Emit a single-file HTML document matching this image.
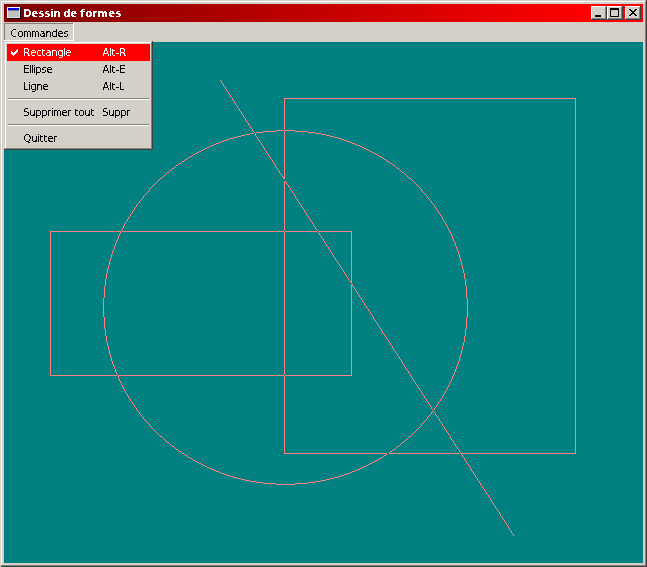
<!DOCTYPE html>
<html><head><meta charset="utf-8"><title>Dessin de formes</title>
<style>
html,body{margin:0;padding:0;}
body{width:647px;height:567px;overflow:hidden;background:#d4d0c8;position:relative;font-family:"Liberation Sans",sans-serif;font-size:11px;color:#000;}
div,span{position:absolute;box-sizing:border-box;white-space:nowrap;}
div>svg{position:absolute;left:0;top:0;}
#title{left:4px;top:4px;width:639px;height:18px;background:linear-gradient(to right,#800000 0,#800000 18px,#ff0000 585px,#ff0000 100%);}
i{position:absolute;left:0;top:0;width:11px;height:2px;background:#0000ff;}
b{position:absolute;left:0;top:2px;width:11px;height:1px;background:#808080;}
u{position:absolute;left:0;top:0;width:12px;height:10px;box-sizing:border-box;border-right:1px solid #dfdfdf;border-bottom:1px solid #dfdfdf;}
#canvas{left:4px;top:42px;width:639px;height:521px;background:#008080;}
.hl{left:7px;top:44px;width:143px;height:17px;background:#ff0000;}
.sep{left:8px;width:141px;height:2px;border-top:1px solid #808080;border-bottom:1px solid #fff;}
#txt{position:absolute;left:0;top:0;font-family:"DejaVu Sans Condensed","Liberation Sans",sans-serif;font-size:11px;}
</style></head><body>
<div style="left:0px;top:0px;width:647px;height:567px;background:#404040"><div style="left:0;top:0;width:646px;height:566px;background:#d4d0c8"><div style="left:1px;top:1px;width:645px;height:565px;background:#808080"><div style="left:0;top:0;width:644px;height:564px;background:#fff"><div style="left:1px;top:1px;width:643px;height:563px;background:#d4d0c8"></div></div></div></div></div><div style="left:0;top:566px;width:1px;height:1px;background:#d4d0c8"></div>
<div id="title"></div>
<div style="left:7px;top:7px;width:14px;height:12px;background:#000"><div style="left:0;top:0;width:13px;height:11px;background:#fff"><div style="left:1px;top:1px;width:12px;height:10px;background:#c0c0c0"><i></i><b></b><u></u></div></div></div>
<div style="left:591px;top:6px;width:16px;height:14px;background:#404040"><div style="left:0;top:0;width:15px;height:13px;background:#fff"><div style="left:1px;top:1px;width:14px;height:12px;background:#808080"><div style="left:0;top:0;width:13px;height:11px;background:#d4d0c8"><div style="left:1px;top:1px;width:12px;height:10px;background:#d4d0c8"><svg width="12" height="10" viewBox="2 2 12 10"><path d="M4 9h6v2h-6z" fill="#000"/></svg></div></div></div></div></div><div style="left:607px;top:6px;width:16px;height:14px;background:#404040"><div style="left:0;top:0;width:15px;height:13px;background:#fff"><div style="left:1px;top:1px;width:14px;height:12px;background:#808080"><div style="left:0;top:0;width:13px;height:11px;background:#d4d0c8"><div style="left:1px;top:1px;width:12px;height:10px;background:#d4d0c8"><svg width="12" height="10" viewBox="2 2 12 10"><path d="M3 2h9v9h-9zM4 4v6h7v-6z" fill="#000" fill-rule="evenodd"/></svg></div></div></div></div></div><div style="left:625px;top:6px;width:16px;height:14px;background:#404040"><div style="left:0;top:0;width:15px;height:13px;background:#fff"><div style="left:1px;top:1px;width:14px;height:12px;background:#808080"><div style="left:0;top:0;width:13px;height:11px;background:#d4d0c8"><div style="left:1px;top:1px;width:12px;height:10px;background:#d4d0c8"><svg width="12" height="10" viewBox="2 2 12 10"><path d="M4 3h2v1h1v1h2v-1h1v-1h2v1h-1v1h-1v1h-1v1h1v1h1v1h1v1h-2v-1h-1v-1h-2v1h-1v1h-2v-1h1v-1h1v-1h1v-1h-1v-1h-1v-1h-1z" fill="#000"/></svg></div></div></div></div></div>
<div style="left:4px;top:23px;width:70px;height:18px;background:#fff"><div style="left:0;top:0;width:69px;height:17px;background:#808080"><div style="left:1px;top:1px;width:68px;height:16px;background:#d4d0c8"></div></div></div>
<div id="canvas"></div>
<svg width="647" height="567" style="position:absolute;left:0;top:0" shape-rendering="crispEdges"><path fill="#ff7f7f" d="M284 98h292v1h-292zM276 130h8v1h-8zM285 130h10v1h-10zM263 131h13v1h-13zM295 131h13v1h-13zM256 132h7v1h-7zM308 132h7v1h-7zM250 133h4v1h-4zM315 133h6v1h-6zM245 134h5v1h-5zM321 134h5v1h-5zM241 135h4v1h-4zM326 135h4v1h-4zM237 136h4v1h-4zM330 136h4v1h-4zM233 137h4v1h-4zM334 137h4v1h-4zM230 138h3v1h-3zM338 138h3v1h-3zM227 139h3v1h-3zM341 139h3v1h-3zM224 140h3v1h-3zM344 140h3v1h-3zM221 141h3v1h-3zM347 141h3v1h-3zM219 142h2v1h-2zM350 142h2v1h-2zM216 143h3v1h-3zM352 143h3v1h-3zM214 144h2v1h-2zM355 144h2v1h-2zM211 145h3v1h-3zM357 145h3v1h-3zM209 146h2v1h-2zM360 146h2v1h-2zM207 147h2v1h-2zM362 147h2v1h-2zM205 148h2v1h-2zM364 148h2v1h-2zM203 149h2v1h-2zM366 149h2v1h-2zM201 150h2v1h-2zM368 150h2v1h-2zM199 151h2v1h-2zM370 151h2v1h-2zM197 152h2v1h-2zM372 152h2v1h-2zM195 153h2v1h-2zM374 153h2v1h-2zM193 154h2v1h-2zM376 154h2v1h-2zM190 156h2v1h-2zM379 156h2v1h-2zM188 157h2v1h-2zM381 157h2v1h-2zM185 159h2v1h-2zM384 159h2v1h-2zM182 161h2v1h-2zM387 161h2v1h-2zM179 163h2v1h-2zM390 163h2v1h-2zM176 165h2v1h-2zM393 165h2v1h-2zM172 168h2v1h-2zM397 168h2v1h-2zM167 172h2v1h-2zM402 172h2v1h-2zM283 177h2v1h-2zM160 178h2v1h-2zM283 178h2v1h-2zM409 178h2v1h-2zM284 181h2v1h-2zM50 231h71v1h-71zM122 231h162v1h-162zM285 231h32v1h-32zM318 231h34v1h-34zM350 281h2v1h-2zM350 282h2v1h-2zM351 284h2v1h-2zM351 285h2v1h-2zM50 375h67v1h-67zM118 375h166v1h-166zM285 375h67v1h-67zM432 411h2v1h-2zM160 436h2v1h-2zM409 436h2v1h-2zM167 442h2v1h-2zM402 442h2v1h-2zM172 446h2v1h-2zM397 446h2v1h-2zM176 449h2v1h-2zM393 449h2v1h-2zM179 451h2v1h-2zM390 451h2v1h-2zM182 453h2v1h-2zM284 453h103v1h-103zM389 453h71v1h-71zM461 453h115v1h-115zM185 455h2v1h-2zM384 455h2v1h-2zM188 457h2v1h-2zM381 457h2v1h-2zM190 458h2v1h-2zM379 458h2v1h-2zM193 460h2v1h-2zM376 460h2v1h-2zM195 461h2v1h-2zM374 461h2v1h-2zM197 462h2v1h-2zM372 462h2v1h-2zM199 463h2v1h-2zM370 463h2v1h-2zM201 464h2v1h-2zM368 464h2v1h-2zM203 465h2v1h-2zM366 465h2v1h-2zM205 466h2v1h-2zM364 466h2v1h-2zM207 467h2v1h-2zM362 467h2v1h-2zM209 468h2v1h-2zM360 468h2v1h-2zM211 469h3v1h-3zM357 469h3v1h-3zM214 470h2v1h-2zM355 470h2v1h-2zM216 471h3v1h-3zM352 471h3v1h-3zM219 472h2v1h-2zM350 472h2v1h-2zM221 473h3v1h-3zM347 473h3v1h-3zM224 474h3v1h-3zM344 474h3v1h-3zM227 475h3v1h-3zM341 475h3v1h-3zM230 476h3v1h-3zM338 476h3v1h-3zM233 477h4v1h-4zM334 477h4v1h-4zM237 478h4v1h-4zM330 478h4v1h-4zM241 479h4v1h-4zM326 479h4v1h-4zM245 480h5v1h-5zM321 480h5v1h-5zM250 481h6v1h-6zM315 481h6v1h-6zM256 482h7v1h-7zM308 482h7v1h-7zM263 483h13v1h-13zM295 483h13v1h-13zM276 484h19v1h-19zM50 232h1v143h-1zM103 298h1v19h-1zM104 286h1v12h-1zM104 317h1v12h-1zM105 279h1v7h-1zM105 329h1v7h-1zM106 273h1v6h-1zM106 336h1v6h-1zM107 269h1v4h-1zM107 342h1v4h-1zM108 265h1v4h-1zM108 346h1v4h-1zM109 261h1v4h-1zM109 350h1v4h-1zM110 258h1v3h-1zM110 354h1v3h-1zM111 254h1v4h-1zM111 357h1v4h-1zM112 251h1v3h-1zM112 361h1v3h-1zM113 249h1v2h-1zM113 364h1v2h-1zM114 246h1v3h-1zM114 366h1v3h-1zM115 243h1v3h-1zM115 369h1v3h-1zM116 241h1v2h-1zM116 372h1v2h-1zM117 239h1v2h-1zM117 374h1v1h-1zM118 236h1v3h-1zM118 376h1v3h-1zM119 234h1v2h-1zM119 379h1v2h-1zM120 232h1v2h-1zM120 381h1v2h-1zM121 230h1v1h-1zM121 383h1v2h-1zM122 228h1v2h-1zM122 385h1v2h-1zM123 226h1v2h-1zM123 387h1v2h-1zM124 224h1v2h-1zM124 389h1v2h-1zM125 222h1v2h-1zM125 391h1v2h-1zM126 221h1v1h-1zM126 393h1v1h-1zM127 219h1v2h-1zM127 394h1v2h-1zM128 217h1v2h-1zM128 396h1v2h-1zM129 216h1v1h-1zM129 398h1v1h-1zM130 214h1v2h-1zM130 399h1v2h-1zM131 213h1v1h-1zM131 401h1v1h-1zM132 211h1v2h-1zM132 402h1v2h-1zM133 210h1v1h-1zM133 404h1v1h-1zM134 208h1v2h-1zM134 405h1v2h-1zM135 207h1v1h-1zM135 407h1v1h-1zM136 205h1v2h-1zM136 408h1v2h-1zM137 204h1v1h-1zM137 410h1v1h-1zM138 203h1v1h-1zM138 411h1v1h-1zM139 201h1v2h-1zM139 412h1v2h-1zM140 200h1v1h-1zM140 414h1v1h-1zM141 199h1v1h-1zM141 415h1v1h-1zM142 198h1v1h-1zM142 416h1v1h-1zM143 196h1v2h-1zM143 417h1v2h-1zM144 195h1v1h-1zM144 419h1v1h-1zM145 194h1v1h-1zM145 420h1v1h-1zM146 193h1v1h-1zM146 421h1v1h-1zM147 192h1v1h-1zM147 422h1v1h-1zM148 191h1v1h-1zM148 423h1v1h-1zM149 189h1v2h-1zM149 424h1v2h-1zM150 188h1v1h-1zM150 426h1v1h-1zM151 187h1v1h-1zM151 427h1v1h-1zM152 186h1v1h-1zM152 428h1v1h-1zM153 185h1v1h-1zM153 429h1v1h-1zM154 184h1v1h-1zM154 430h1v1h-1zM155 183h1v1h-1zM155 431h1v1h-1zM156 182h1v1h-1zM156 432h1v1h-1zM157 181h1v1h-1zM157 433h1v1h-1zM158 180h1v1h-1zM158 434h1v1h-1zM159 179h1v1h-1zM159 435h1v1h-1zM162 177h1v1h-1zM162 437h1v1h-1zM163 176h1v1h-1zM163 438h1v1h-1zM164 175h1v1h-1zM164 439h1v1h-1zM165 174h1v1h-1zM165 440h1v1h-1zM166 173h1v1h-1zM166 441h1v1h-1zM169 171h1v1h-1zM169 443h1v1h-1zM170 170h1v1h-1zM170 444h1v1h-1zM171 169h1v1h-1zM171 445h1v1h-1zM174 167h1v1h-1zM174 447h1v1h-1zM175 166h1v1h-1zM175 448h1v1h-1zM178 164h1v1h-1zM178 450h1v1h-1zM181 162h1v1h-1zM181 452h1v1h-1zM184 160h1v1h-1zM184 454h1v1h-1zM187 158h1v1h-1zM187 456h1v1h-1zM192 155h1v1h-1zM192 459h1v1h-1zM220 80h1v1h-1zM221 81h1v2h-1zM222 83h1v1h-1zM223 84h1v2h-1zM224 86h1v1h-1zM225 87h1v2h-1zM226 89h1v2h-1zM227 91h1v1h-1zM228 92h1v2h-1zM229 94h1v1h-1zM230 95h1v2h-1zM231 97h1v1h-1zM232 98h1v2h-1zM233 100h1v1h-1zM234 101h1v2h-1zM235 103h1v2h-1zM236 105h1v1h-1zM237 106h1v2h-1zM238 108h1v1h-1zM239 109h1v2h-1zM240 111h1v1h-1zM241 112h1v2h-1zM242 114h1v1h-1zM243 115h1v2h-1zM244 117h1v1h-1zM245 118h1v2h-1zM246 120h1v2h-1zM247 122h1v1h-1zM248 123h1v2h-1zM249 125h1v1h-1zM250 126h1v2h-1zM251 128h1v1h-1zM252 129h1v2h-1zM253 131h1v1h-1zM254 132h1v1h-1zM255 133h1v3h-1zM256 136h1v1h-1zM257 137h1v2h-1zM258 139h1v1h-1zM259 140h1v2h-1zM260 142h1v1h-1zM261 143h1v2h-1zM262 145h1v1h-1zM263 146h1v2h-1zM264 148h1v2h-1zM265 150h1v1h-1zM266 151h1v2h-1zM267 153h1v1h-1zM268 154h1v2h-1zM269 156h1v1h-1zM270 157h1v2h-1zM271 159h1v1h-1zM272 160h1v2h-1zM273 162h1v1h-1zM274 163h1v2h-1zM275 165h1v2h-1zM276 167h1v1h-1zM277 168h1v2h-1zM278 170h1v1h-1zM279 171h1v2h-1zM280 173h1v1h-1zM281 174h1v2h-1zM282 176h1v1h-1zM284 99h1v31h-1zM284 131h1v46h-1zM284 182h1v49h-1zM284 232h1v143h-1zM284 376h1v77h-1zM286 182h1v2h-1zM287 184h1v1h-1zM288 185h1v2h-1zM289 187h1v1h-1zM290 188h1v2h-1zM291 190h1v1h-1zM292 191h1v2h-1zM293 193h1v1h-1zM294 194h1v2h-1zM295 196h1v2h-1zM296 198h1v1h-1zM297 199h1v2h-1zM298 201h1v1h-1zM299 202h1v2h-1zM300 204h1v1h-1zM301 205h1v2h-1zM302 207h1v1h-1zM303 208h1v2h-1zM304 210h1v2h-1zM305 212h1v1h-1zM306 213h1v2h-1zM307 215h1v1h-1zM308 216h1v2h-1zM309 218h1v1h-1zM310 219h1v2h-1zM311 221h1v1h-1zM312 222h1v2h-1zM313 224h1v2h-1zM314 226h1v1h-1zM315 227h1v2h-1zM316 229h1v1h-1zM317 230h1v1h-1zM318 232h1v1h-1zM319 233h1v2h-1zM320 235h1v1h-1zM321 236h1v2h-1zM322 238h1v1h-1zM323 239h1v2h-1zM324 241h1v2h-1zM325 243h1v1h-1zM326 244h1v2h-1zM327 246h1v1h-1zM328 247h1v2h-1zM329 249h1v1h-1zM330 250h1v2h-1zM331 252h1v1h-1zM332 253h1v2h-1zM333 255h1v2h-1zM334 257h1v1h-1zM335 258h1v2h-1zM336 260h1v1h-1zM337 261h1v2h-1zM338 263h1v1h-1zM339 264h1v2h-1zM340 266h1v1h-1zM341 267h1v2h-1zM342 269h1v1h-1zM343 270h1v2h-1zM344 272h1v2h-1zM345 274h1v1h-1zM346 275h1v2h-1zM347 277h1v1h-1zM348 278h1v2h-1zM349 280h1v1h-1zM351 232h1v49h-1zM351 286h1v89h-1zM353 286h1v2h-1zM354 288h1v1h-1zM355 289h1v2h-1zM356 291h1v1h-1zM357 292h1v2h-1zM358 294h1v1h-1zM359 295h1v2h-1zM360 297h1v1h-1zM361 298h1v2h-1zM362 300h1v2h-1zM363 302h1v1h-1zM364 303h1v2h-1zM365 305h1v1h-1zM366 306h1v2h-1zM367 308h1v1h-1zM368 309h1v2h-1zM369 311h1v1h-1zM370 312h1v2h-1zM371 314h1v1h-1zM372 315h1v2h-1zM373 317h1v2h-1zM374 319h1v1h-1zM375 320h1v2h-1zM376 322h1v1h-1zM377 323h1v2h-1zM378 155h1v1h-1zM378 325h1v1h-1zM378 459h1v1h-1zM379 326h1v2h-1zM380 328h1v1h-1zM381 329h1v2h-1zM382 331h1v2h-1zM383 158h1v1h-1zM383 333h1v1h-1zM383 456h1v1h-1zM384 334h1v2h-1zM385 336h1v1h-1zM386 160h1v1h-1zM386 337h1v2h-1zM386 454h1v1h-1zM387 339h1v1h-1zM388 340h1v2h-1zM389 162h1v1h-1zM389 342h1v1h-1zM389 452h1v1h-1zM390 343h1v2h-1zM391 345h1v1h-1zM392 164h1v1h-1zM392 346h1v2h-1zM392 450h1v1h-1zM393 348h1v2h-1zM394 350h1v1h-1zM395 166h1v1h-1zM395 351h1v2h-1zM395 448h1v1h-1zM396 167h1v1h-1zM396 353h1v1h-1zM396 447h1v1h-1zM397 354h1v2h-1zM398 356h1v1h-1zM399 169h1v1h-1zM399 357h1v2h-1zM399 445h1v1h-1zM400 170h1v1h-1zM400 359h1v1h-1zM400 444h1v1h-1zM401 171h1v1h-1zM401 360h1v2h-1zM401 443h1v1h-1zM402 362h1v2h-1zM403 364h1v1h-1zM404 173h1v1h-1zM404 365h1v2h-1zM404 441h1v1h-1zM405 174h1v1h-1zM405 367h1v1h-1zM405 440h1v1h-1zM406 175h1v1h-1zM406 368h1v2h-1zM406 439h1v1h-1zM407 176h1v1h-1zM407 370h1v1h-1zM407 438h1v1h-1zM408 177h1v1h-1zM408 371h1v2h-1zM408 437h1v1h-1zM409 373h1v1h-1zM410 374h1v2h-1zM411 179h1v1h-1zM411 376h1v2h-1zM411 435h1v1h-1zM412 180h1v1h-1zM412 378h1v1h-1zM412 434h1v1h-1zM413 181h1v1h-1zM413 379h1v2h-1zM413 433h1v1h-1zM414 182h1v1h-1zM414 381h1v1h-1zM414 432h1v1h-1zM415 183h1v1h-1zM415 382h1v2h-1zM415 431h1v1h-1zM416 184h1v1h-1zM416 384h1v1h-1zM416 430h1v1h-1zM417 185h1v1h-1zM417 385h1v2h-1zM417 429h1v1h-1zM418 186h1v1h-1zM418 387h1v1h-1zM418 428h1v1h-1zM419 187h1v1h-1zM419 388h1v2h-1zM419 427h1v1h-1zM420 188h1v1h-1zM420 390h1v1h-1zM420 426h1v1h-1zM421 189h1v2h-1zM421 391h1v2h-1zM421 424h1v2h-1zM422 191h1v1h-1zM422 393h1v2h-1zM422 423h1v1h-1zM423 192h1v1h-1zM423 395h1v1h-1zM423 422h1v1h-1zM424 193h1v1h-1zM424 396h1v2h-1zM424 421h1v1h-1zM425 194h1v1h-1zM425 398h1v1h-1zM425 420h1v1h-1zM426 195h1v1h-1zM426 399h1v2h-1zM426 419h1v1h-1zM427 196h1v2h-1zM427 401h1v1h-1zM427 417h1v2h-1zM428 198h1v1h-1zM428 402h1v2h-1zM428 416h1v1h-1zM429 199h1v1h-1zM429 404h1v1h-1zM429 415h1v1h-1zM430 200h1v1h-1zM430 405h1v2h-1zM430 414h1v1h-1zM431 201h1v2h-1zM431 407h1v2h-1zM431 412h1v2h-1zM432 203h1v1h-1zM432 409h1v1h-1zM433 204h1v1h-1zM434 205h1v2h-1zM434 408h1v2h-1zM434 412h1v1h-1zM435 207h1v1h-1zM435 407h1v1h-1zM435 413h1v2h-1zM436 208h1v2h-1zM436 405h1v2h-1zM436 415h1v1h-1zM437 210h1v1h-1zM437 404h1v1h-1zM437 416h1v2h-1zM438 211h1v2h-1zM438 402h1v2h-1zM438 418h1v1h-1zM439 213h1v1h-1zM439 401h1v1h-1zM439 419h1v2h-1zM440 214h1v2h-1zM440 399h1v2h-1zM440 421h1v1h-1zM441 216h1v1h-1zM441 398h1v1h-1zM441 422h1v2h-1zM442 217h1v2h-1zM442 396h1v2h-1zM442 424h1v2h-1zM443 219h1v2h-1zM443 394h1v2h-1zM443 426h1v1h-1zM444 221h1v1h-1zM444 393h1v1h-1zM444 427h1v2h-1zM445 222h1v2h-1zM445 391h1v2h-1zM445 429h1v1h-1zM446 224h1v2h-1zM446 389h1v2h-1zM446 430h1v2h-1zM447 226h1v2h-1zM447 387h1v2h-1zM447 432h1v1h-1zM448 228h1v2h-1zM448 385h1v2h-1zM448 433h1v2h-1zM449 230h1v2h-1zM449 383h1v2h-1zM449 435h1v1h-1zM450 232h1v2h-1zM450 381h1v2h-1zM450 436h1v2h-1zM451 234h1v2h-1zM451 379h1v2h-1zM451 438h1v2h-1zM452 236h1v3h-1zM452 376h1v3h-1zM452 440h1v1h-1zM453 239h1v2h-1zM453 374h1v2h-1zM453 441h1v2h-1zM454 241h1v2h-1zM454 372h1v2h-1zM454 443h1v1h-1zM455 243h1v3h-1zM455 369h1v3h-1zM455 444h1v2h-1zM456 246h1v3h-1zM456 366h1v3h-1zM456 446h1v1h-1zM457 249h1v2h-1zM457 364h1v2h-1zM457 447h1v2h-1zM458 251h1v3h-1zM458 361h1v3h-1zM458 449h1v1h-1zM459 254h1v4h-1zM459 357h1v4h-1zM459 450h1v2h-1zM460 258h1v3h-1zM460 354h1v3h-1zM460 452h1v1h-1zM461 261h1v4h-1zM461 350h1v4h-1zM461 454h1v1h-1zM462 265h1v4h-1zM462 346h1v4h-1zM462 455h1v2h-1zM463 269h1v4h-1zM463 342h1v4h-1zM463 457h1v1h-1zM464 273h1v6h-1zM464 336h1v6h-1zM464 458h1v2h-1zM465 279h1v7h-1zM465 329h1v7h-1zM465 460h1v1h-1zM466 286h1v12h-1zM466 317h1v12h-1zM466 461h1v2h-1zM467 298h1v19h-1zM467 463h1v1h-1zM468 464h1v2h-1zM469 466h1v1h-1zM470 467h1v2h-1zM471 469h1v2h-1zM472 471h1v1h-1zM473 472h1v2h-1zM474 474h1v1h-1zM475 475h1v2h-1zM476 477h1v1h-1zM477 478h1v2h-1zM478 480h1v1h-1zM479 481h1v2h-1zM480 483h1v2h-1zM481 485h1v1h-1zM482 486h1v2h-1zM483 488h1v1h-1zM484 489h1v2h-1zM485 491h1v1h-1zM486 492h1v2h-1zM487 494h1v1h-1zM488 495h1v2h-1zM489 497h1v1h-1zM490 498h1v2h-1zM491 500h1v2h-1zM492 502h1v1h-1zM493 503h1v2h-1zM494 505h1v1h-1zM495 506h1v2h-1zM496 508h1v1h-1zM497 509h1v2h-1zM498 511h1v1h-1zM499 512h1v2h-1zM500 514h1v2h-1zM501 516h1v1h-1zM502 517h1v2h-1zM503 519h1v1h-1zM504 520h1v2h-1zM505 522h1v1h-1zM506 523h1v2h-1zM507 525h1v1h-1zM508 526h1v2h-1zM509 528h1v2h-1zM510 530h1v1h-1zM511 531h1v2h-1zM512 533h1v1h-1zM513 534h1v2h-1zM575 99h1v354h-1z"/></svg>
<div style="left:4px;top:41px;width:149px;height:109px;background:#404040"><div style="left:0;top:0;width:148px;height:108px;background:#d4d0c8"><div style="left:1px;top:1px;width:147px;height:107px;background:#808080"><div style="left:0;top:0;width:146px;height:106px;background:#fff"><div style="left:1px;top:1px;width:145px;height:105px;background:#d4d0c8"></div></div></div></div></div>
<div class="hl"></div>
<svg width="7" height="7" style="position:absolute;left:11px;top:49px" shape-rendering="crispEdges"><path fill="#fff" d="M6 0h1v3h-1zM5 1h1v3h-1zM4 2h1v3h-1zM3 3h1v3h-1zM2 4h1v3h-1zM1 3h1v3h-1zM0 2h1v3h-1z"/></svg>
<div class="sep" style="top:98px"></div>
<div class="sep" style="top:124px"></div>
<svg id="txt" width="647" height="567">
<filter id="fr" x="0" y="0" width="100%" height="100%" color-interpolation-filters="sRGB"><feComponentTransfer><feFuncA type="linear" slope="40" intercept="-19.5"/></feComponentTransfer></filter>
<filter id="fb" x="0" y="0" width="100%" height="100%" color-interpolation-filters="sRGB"><feComponentTransfer><feFuncA type="linear" slope="40" intercept="-21.9"/></feComponentTransfer></filter>
<text x="23.5 31.5 38.5 44.5 50.25 53.5 60 63.5 70.5 77 80.25 85.5 92.25 97.5 108.5 115.5" y="17" fill="#fff" font-weight="bold" filter="url(#fb)">Dessin de formes</text>
<text x="10.5 17.5 23 31 39.5 45.5 51.5 57.5 63.5" y="37" fill="#000" filter="url(#fr)">Co<tspan font-size="10">mm</tspan>andes</text>
<text x="23.25 30.25 36.25 41.25 45.5 51.25 57.5 63.25 65.25" y="56" fill="#fff" filter="url(#fr)">Rectangle</text>
<text x="102.5 109.25 111.25 115.5 119.25" y="56" fill="#fff" filter="url(#fr)">Alt-R</text>
<text x="23.25 29.25 31.25 33.25 35.25 41.5 46.5" y="73" fill="#000" filter="url(#fr)">Ellipse</text>
<text x="102.5 109.25 111.25 115.75 119.25" y="73" fill="#000" filter="url(#fr)">Alt-E</text>
<text x="23 28.25 30.5 36.5 42.5" y="90" fill="#000" filter="url(#fr)">Ligne</text>
<text x="102.5 109.25 111.25 115.75 119" y="90" fill="#000" filter="url(#fr)">Alt-L</text>
<text x="23.25 29.25 35.25 41.25 47.25 51.25 53 61.5 67.25 71 74.25 78.5 84.25 90.25" y="116" fill="#000" filter="url(#fr)">Suppri<tspan font-size="10">m</tspan>er tout</text>
<text x="102.25 108.25 114.25 120.25 126.25" y="116" fill="#000" filter="url(#fr)">Suppr</text>
<text x="23.5 31.25 37.25 39.25 43.25 47.5 53.25" y="142" fill="#000" filter="url(#fr)">Quitter</text>
</svg>
</body></html>
